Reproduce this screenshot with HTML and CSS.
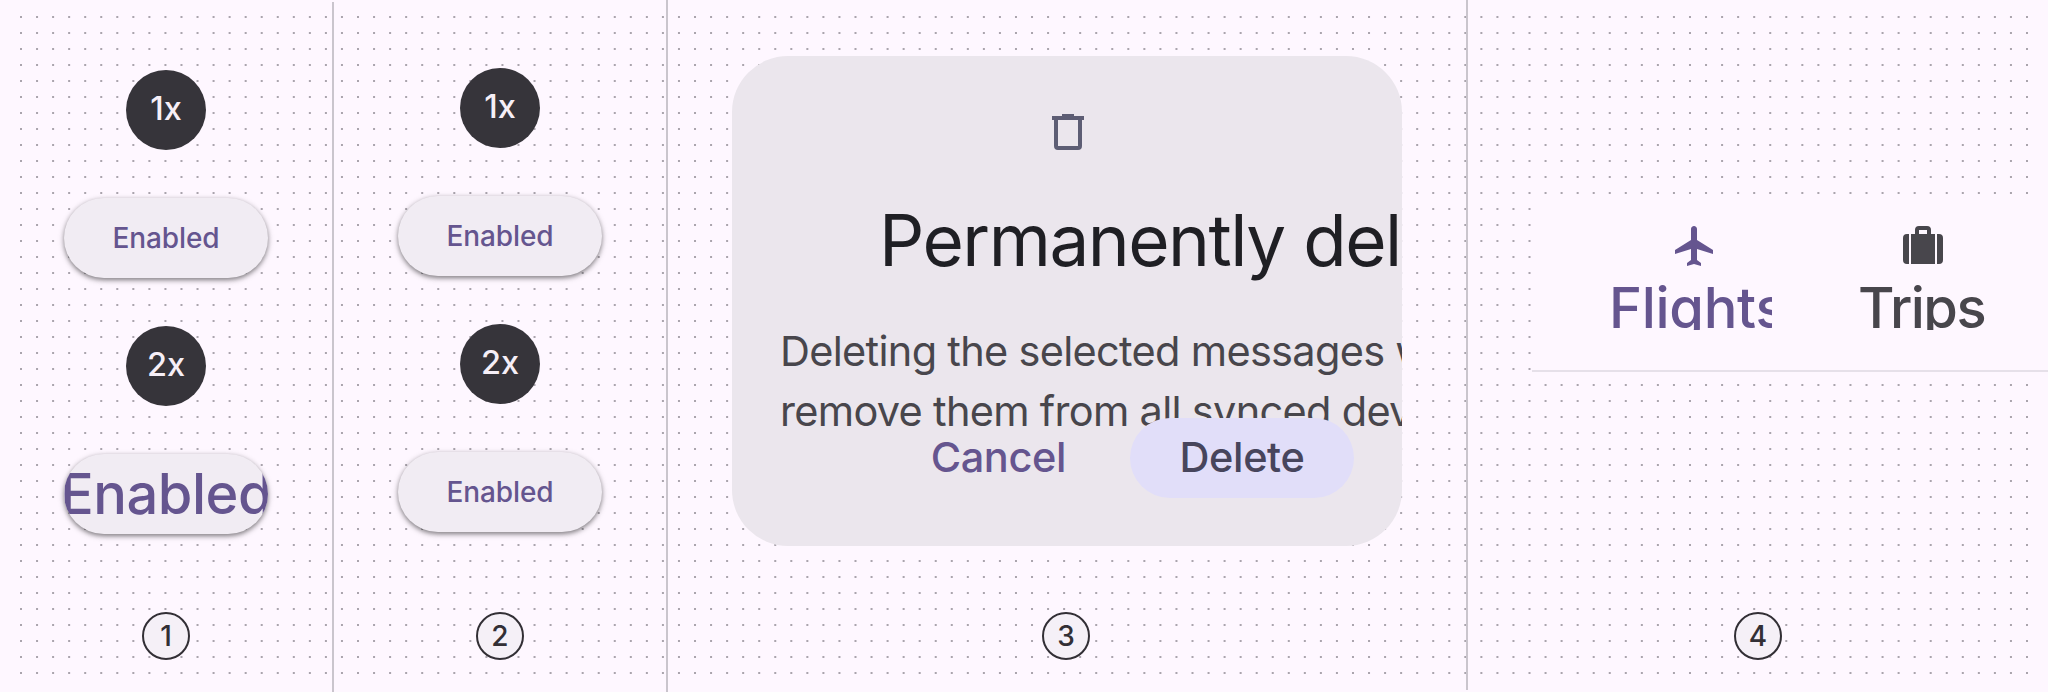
FILE: index.html
```html
<!DOCTYPE html>
<html lang="en">
<head>
<meta charset="utf-8">
<title>Text scaling</title>
<link rel="stylesheet" href="styles.css">
</head>
<body>
<svg class="dots" width="2048" height="692" aria-hidden="true"><path id="dots"/></svg>
<main class="board">
  <section class="panel narrow">
    <div class="scale">1x</div>
    <div class="button"><span class="fit-small">Enabled</span></div>
    <div class="scale second">2x</div>
    <div class="button"><span class="fit-large">Enabled</span></div>
    <div class="step">1</div>
  </section>
  <section class="panel narrow raised">
    <div class="scale">1x</div>
    <div class="button"><span class="fit-small">Enabled</span></div>
    <div class="scale second">2x</div>
    <div class="button"><span class="fit-small">Enabled</span></div>
    <div class="step">2</div>
  </section>
  <section class="panel wide">
    <div class="dialog">
      <svg class="trash" width="32" height="36" viewBox="0 0 32 36"><path fill-rule="evenodd" d="M10 0h12v2h10v4h-2v26a4 4 0 0 1-4 4H6a4 4 0 0 1-4-4V6H0V2h10zM6 6v26h20V6z"/></svg>
      <h1 class="title">Permanently delete?</h1>
      <p class="copy">Deleting the selected messages will<br>remove them from all synced devices.</p>
      <div class="actions">
        <button class="action">Cancel</button>
        <button class="action filled">Delete</button>
      </div>
    </div>
    <div class="step">3</div>
  </section>
  <section class="panel tabs-panel">
    <nav class="tabs">
      <div class="tab active">
        <svg class="plane" width="40" height="40" viewBox="1.5 2 20 20"><path d="M21 16v-2l-8-5V3.5c0-.83-.67-1.5-1.5-1.5S10 2.67 10 3.5V9l-8 5v2l8-2.5V19l-2 1.5V22l3.5-1 3.5 1v-1.5L13 19v-5.5l8 2.5z"/></svg>
        <span class="label flights">Flights</span>
      </div>
      <div class="tab">
        <svg class="luggage" width="40" height="40" viewBox="0 0 40 40"><path fill-rule="evenodd" d="M8 8h4V4a4 4 0 0 1 4-4h8a4 4 0 0 1 4 4v4h4v30H8zM16 4v4h8V4z"/><path d="M6 8v30H4a4 4 0 0 1-4-4V12a4 4 0 0 1 4-4zM34 8h2a4 4 0 0 1 4 4v22a4 4 0 0 1-4 4h-2z"/></svg>
        <span class="label trips">Trips</span>
      </div>
    </nav>
    <div class="step">4</div>
  </section>
</main>
<script src="dots.js"></script>
</body>
</html>
```
FILE: styles.css
```css
* { box-sizing: border-box; }
body {
  margin: 0;
  width: 2048px;
  height: 692px;
  overflow: hidden;
  background: #fef7ff;
  color: #48464c;
  font-family: Inter, "Liberation Sans", sans-serif;
}
.dots { position: absolute; inset: 0; }
.dots path { stroke: #aaa4ad; stroke-width: 2; stroke-dasharray: 2 14.048; fill: none; }
.board { position: relative; display: flex; height: 692px; }
.panel { display: flex; flex-direction: column; align-items: center; border-right: 2px solid #cac5cd; }
.narrow { width: 334px; height: 690px; margin-top: 2px; padding-top: 68px; }
.raised { height: 692px; margin-top: 0; }
.wide { width: 800px; height: 690px; padding-top: 56px; }
.tabs-panel { width: 580px; padding-top: 196px; border: 0; }
.scale {
  width: 80px; height: 80px; flex: none;
  border-radius: 50%;
  background: #36343a;
  color: #f6eff7;
  font-size: 32.5px; font-weight: 500; line-height: 77px; text-align: center;
}
.second { margin-top: 48px; }
.button {
  width: 204px; height: 80px; flex: none;
  margin-top: 48px;
  display: flex; align-items: center; justify-content: center;
  border-radius: 40px;
  overflow: hidden;
  background: #f1ecf3;
  color: #65558f;
  font-weight: 500;
  white-space: nowrap;
  box-shadow: 0 2px 4px rgba(0, 0, 0, .38), 0 2px 6px 1px rgba(0, 0, 0, .14);
}
.fit-small { font-size: 28px; letter-spacing: -.1px; }
.fit-large { font-size: 56px; letter-spacing: -.5px; }
.step {
  width: 48px; height: 48px; flex: none;
  margin-top: 78px;
  border: 2px solid #322f35;
  border-radius: 50%;
  background: #f5f0f7;
  color: #322f35;
  font-size: 28px; font-weight: 500; line-height: 45px; text-align: center;
}
.raised .step { margin-top: 80px; }
.dialog {
  width: 670px; height: 490px; flex: none;
  padding-left: 50px;
  border-radius: 56px;
  overflow: hidden;
  background: #ebe6ed;
  white-space: nowrap;
}
.trash { display: block; margin: 58px 0 0 270px; fill: #5d5d74; }
.title { margin: 44px 0 0 97px; font-size: 71px; line-height: 92px; font-weight: 400; letter-spacing: -1.5px; color: #1f1f24; }
.copy { margin: 35px 0 0 -2px; font-size: 41.5px; line-height: 60px; letter-spacing: -.7px; }
.actions { display: flex; justify-content: flex-end; gap: 16px; margin: -23px 48px 0 0; position: relative; }
.action {
  height: 80px; padding: 0 48px 2px;
  border: 0; border-radius: 40px;
  background: transparent;
  color: #65558f;
  font: 500 41.5px/78px Inter, sans-serif;
  letter-spacing: -.4px;
}
.filled { background: #e1def9; color: #47455c; width: 224px; }
.wide .step { margin-top: 66px; margin-right: 2px; }
.tabs {
  width: 516px; height: 176px;
  margin-left: auto;
  display: flex; padding: 30px 0 0 80px; gap: 88px;
  background: #fef7ff;
  border-bottom: 2px solid #e6e0e9;
}
.tab { display: flex; flex-direction: column; align-items: center; width: 160px; fill: #48464c; }
.active { color: #65558f; fill: #65558f; }
.plane { margin-left: 4px; }
.luggage { margin-right: 34px; }
.label { width: 100%; height: 52px; margin-top: 12px; overflow: hidden; font-size: 56px; line-height: 60px; font-weight: 500; white-space: nowrap; }
.flights { text-indent: -3px; letter-spacing: -.3px; }
.trips { text-indent: -2px; letter-spacing: -1.5px; }
.tabs-panel .step { margin-top: 240px; }
```
FILE: dots.js
```js
let d = "";
for (let y = 17; y <= 673; y += 16) d += `M20 ${y}H2028.5`;
document.getElementById("dots").setAttribute("d", d);
```
